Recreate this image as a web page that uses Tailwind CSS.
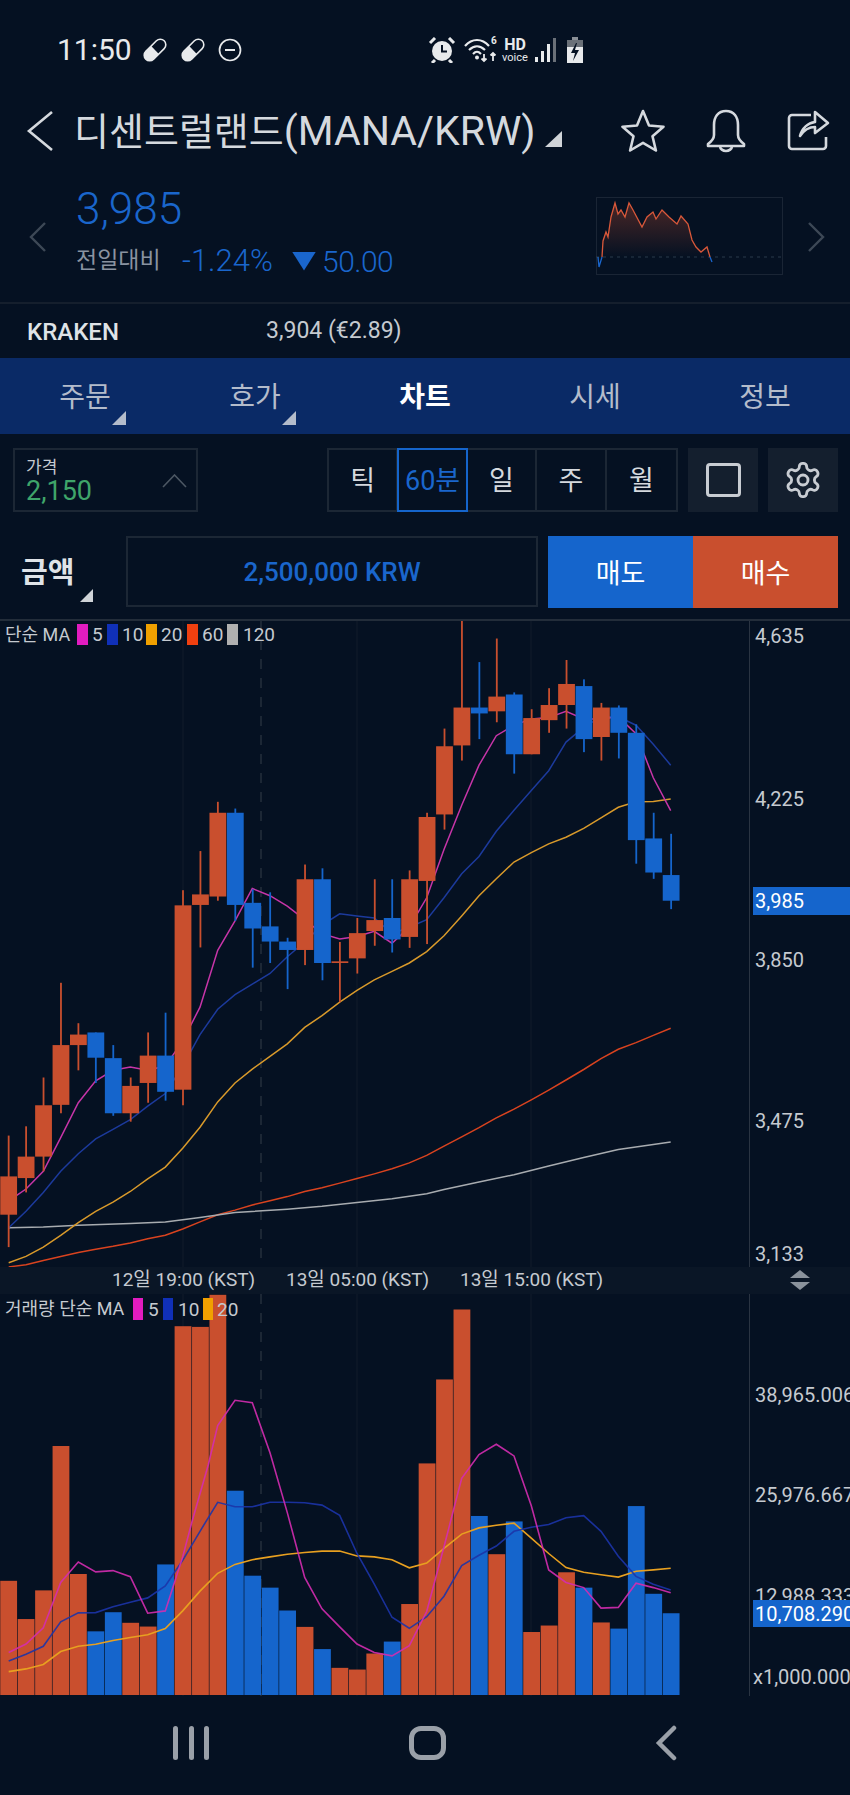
<!DOCTYPE html>
<html lang="ko">
<head>
<meta charset="utf-8">
<meta name="viewport" content="width=device-width, initial-scale=1.0">
<script src="https://cdn.jsdelivr.net/npm/@tailwindcss/browser@4"></script>
<title>MANA/KRW</title>
</head>
<body class="bg-[#051122]">
<div class="relative w-[850px] h-[1795px] overflow-hidden bg-[#051122] text-[#d5d9de] font-[Roboto,'Noto_Sans_CJK_KR',sans-serif]">

  <!-- status bar -->
  <div class="h-[102px] flex items-center pl-[57px] pb-[2px] text-[#e8eaec]">
    <span class="text-[30px] leading-none w-[85px]">11:50</span>
    <svg class="w-[26px] h-[26px]" viewBox="0 0 26 26"><g transform="rotate(45 13 13)"><rect x="7.5" y="0" width="11" height="26" rx="5.5" fill="none" stroke="#e8eaec" stroke-width="1.6"/><path d="M7.5 13h11v7.5a5.5 5.5 0 0 1-11 0z" fill="#e8eaec"/></g></svg>
    <svg class="w-[26px] h-[26px] ml-[12px]" viewBox="0 0 26 26"><g transform="rotate(45 13 13)"><rect x="7.5" y="0" width="11" height="26" rx="5.5" fill="none" stroke="#e8eaec" stroke-width="1.6"/><path d="M7.5 13h11v7.5a5.5 5.5 0 0 1-11 0z" fill="#e8eaec"/></g></svg>
    <svg class="w-[24px] h-[24px] ml-[12px]" viewBox="0 0 24 24"><circle cx="12" cy="12" r="10.5" fill="none" stroke="#e8eaec" stroke-width="1.7"/><rect x="7" y="11" width="10" height="2" fill="#e8eaec"/></svg>
    <svg class="w-[28px] h-[26px] ml-[186px]" viewBox="0 0 28 26"><circle cx="14" cy="14" r="10" fill="#e8eaec"/><path d="M14 8v6.5h5" fill="none" stroke="#051122" stroke-width="2"/><path d="M2 6l5-5M26 6l-5-5M7 23l-3 3M21 23l3 3" stroke="#e8eaec" stroke-width="3" fill="none"/></svg>
    <div class="relative w-[35px] h-[26px] ml-[8px]">
      <svg class="absolute left-0 top-0 w-[35px] h-[26px]" viewBox="0 0 35 26" fill="none" stroke="#e8eaec" stroke-width="2.200"><path d="M1 9c7-8 17-8 24 0"/><path d="M5 13c5-5 11-5 16 0"/><path d="M9 17c3-3 5-3 8 0"/><circle cx="13" cy="20.500" r="2" fill="#e8eaec" stroke="none"/><path d="M20 24v-7M17.500 21.500l2.500 2.500 2.500-2.500M29 24v-8M26.500 18.500l2.500-2.500 2.500 2.500" stroke-width="1.800"/></svg>
      <span class="absolute left-[27px] -top-[1px] text-[10px] font-bold leading-none">6</span>
    </div>
    <div class="w-[28px] ml-[2px] flex flex-col items-center">
      <span class="text-[16px] font-bold leading-[13px]">HD</span>
      <span class="text-[11px] leading-[10px] mt-[2px]">voice</span>
    </div>
    <div class="flex items-end gap-[3px] h-[24px] ml-[6px]">
      <div class="w-[3px] h-[5px] bg-[#e8eaec]"></div>
      <div class="w-[3px] h-[11px] bg-[#e8eaec]"></div>
      <div class="w-[3px] h-[18px] bg-[#e8eaec]"></div>
      <div class="w-[3px] h-[24px] bg-[#6a7078]"></div>
    </div>
    <svg class="w-[18px] h-[26px] ml-[10px]" viewBox="0 0 18 26"><rect x="6" y="0" width="6" height="3" fill="#8a8f96"/><rect x="1" y="3" width="16" height="8" fill="#6a7078"/><rect x="1" y="10" width="16" height="16" fill="#e8eaec"/><path d="M10 6l-5 10h4l-2 8 6-11h-4l2-7z" fill="#051122"/></svg>
  </div>

  <!-- title row -->
  <div class="h-[58px] flex items-center">
    <svg class="w-[28px] h-[42px] ml-[26px]" viewBox="0 0 28 42" fill="none" stroke="#d5d9de" stroke-width="2.6"><path d="M26 2L3 21l23 19"/></svg>
    <span class="ml-[20px] w-[471px] whitespace-nowrap leading-none text-[38px] text-[#d5d9de]">디센트럴랜드<span class="text-[41px]">(MANA/KRW)</span></span>
    <div class="w-[17px] h-[16px] mt-[16px] bg-[#d0d4d8] [clip-path:polygon(100%_0,100%_100%,0_100%)]"></div>
    <svg class="w-[44px] h-[44px] ml-[59px]" viewBox="0 0 44 44" fill="none" stroke="#d5d9de" stroke-width="2.6" stroke-linejoin="round"><path d="M22 2l6 14.500 14.500 1.200-11 9.500 3.400 14.300L22 33.800 9.100 41.500l3.400-14.300-11-9.500L16 16.500z"/></svg>
    <svg class="w-[42px] h-[44px] ml-[40px]" viewBox="0 0 42 44" fill="none" stroke="#d5d9de" stroke-width="2.6" stroke-linejoin="round"><path d="M21 2c-8 0-12 6-12 14v10c0 4-2 6-6 9v2h36v-2c-4-3-6-5-6-9V16c0-8-4-14-12-14z"/><path d="M15 37c0 3 3 5 6 5s6-2 6-5"/></svg>
    <svg class="w-[44px] h-[44px] ml-[40px]" viewBox="0 0 44 44" fill="none" stroke="#d5d9de" stroke-width="2.6" stroke-linejoin="round"><path d="M24 6H5a3 3 0 0 0-3 3v28a3 3 0 0 0 3 3h31a3 3 0 0 0 3-3V28"/><path d="M13 27c2-8 8-13 15-14V3l13 11-13 10v-6c-6 0-11 3-15 9z"/></svg>
  </div>

  <!-- price row -->
  <div class="h-[144px] relative border-b-2 border-[#151f2d] flex items-start">
    <svg class="w-[18px] h-[30px] ml-[29px] mt-[62px]" viewBox="0 0 18 30" fill="none" stroke="#3d4856" stroke-width="2.4"><path d="M16 1L2 15l14 14"/></svg>
    <div class="ml-[29px]">
      <div class="text-[44px] leading-none font-light text-[#1a66cc] mt-[27px] h-[54px]">3,985</div>
      <div class="flex items-center h-[40px] whitespace-nowrap">
        <span class="text-[23px] text-[#8a93a0] w-[106px]">전일대비</span>
        <span class="text-[31px] font-light text-[#1a66cc] w-[110px]">-1.24%</span>
        <div class="w-[24px] h-[19px] bg-[#1a66cc] [clip-path:polygon(0_0,100%_0,50%_100%)]"></div>
        <span class="text-[30px] font-light text-[#1a66cc] ml-[6px] tracking-[-0.5px]">50.00</span>
      </div>
    </div>
    <svg class="absolute left-[596px] top-[37px] w-[187px] h-[78px]" viewBox="0 0 187 78">
      <defs><linearGradient id="sparkFill" x1="0" y1="0" x2="0" y2="1"><stop offset="0" stop-color="#c94f2e" stop-opacity="0.35"/><stop offset="1" stop-color="#c94f2e" stop-opacity="0"/></linearGradient></defs>
      <rect x="0.500" y="0.500" width="186" height="77" fill="none" stroke="#1a2535"/>
      <path d="M6 60L7 44 10 35 12 40 15 20 19 6 22 17 25 13 29 20 33 6 37 13 46 30 51 20 57 15 60 22 66 13 73 20 81 27 85 19 92 27 96 43 100 50 105 55 111 50 114 60z" fill="url(#sparkFill)"/>
      <path d="M0 60H186" stroke="#2a3a4a" stroke-dasharray="3 4"/>
      <path d="M6 60L7 44 10 35 12 40 15 20 19 6 22 17 25 13 29 20 33 6 37 13 46 30 51 20 57 15 60 22 66 13 73 20 81 27 85 19 92 27 96 43 100 50 105 55 111 50 114 60" fill="none" stroke="#d9583a" stroke-width="1.300"/>
      <path d="M2 60l1 10 3-10M114 60l2 5" fill="none" stroke="#1a66cc" stroke-width="1.300"/>
    </svg>
    <svg class="absolute left-[807px] top-[62px] w-[18px] h-[30px]" viewBox="0 0 18 30" fill="none" stroke="#3d4856" stroke-width="2.4"><path d="M2 1l14 14L2 29"/></svg>
  </div>

  <!-- exchange row -->
  <div class="h-[54px] flex items-center pl-[27px] pt-[1px] whitespace-nowrap">
    <span class="text-[24px] font-medium w-[239px] text-[#dfe3e7]">KRAKEN</span>
    <span class="text-[23px] text-[#c5cad0]">3,904 (€2.89)</span>
  </div>

  <!-- tabs -->
  <div class="h-[76px] grid grid-cols-5 bg-[#0a2a66] text-[28px] text-center text-[#b4bccb]">
    <div class="relative flex items-center justify-center pt-[4px]">주문<div class="absolute left-[112px] top-[53px] w-[14px] h-[14px] bg-[#b4bccb] [clip-path:polygon(100%_0,100%_100%,0_100%)]"></div></div>
    <div class="relative flex items-center justify-center pt-[4px]">호가<div class="absolute left-[112px] top-[53px] w-[14px] h-[14px] bg-[#b4bccb] [clip-path:polygon(100%_0,100%_100%,0_100%)]"></div></div>
    <div class="flex items-center justify-center pt-[4px] text-white font-bold">차트</div>
    <div class="flex items-center justify-center pt-[4px]">시세</div>
    <div class="flex items-center justify-center pt-[4px]">정보</div>
  </div>

  <!-- chart options -->
  <div class="flex pt-[14px] h-[102px]">
    <div class="ml-[13px] w-[185px] h-[64px] border-2 border-[#1c2735] pl-[11px] relative">
      <div class="text-[17px] leading-none mt-[9px] text-[#c5cad0]">가격</div>
      <div class="text-[27px] leading-none mt-[2px] text-[#3fa56a]">2,150</div>
      <svg class="absolute left-[147px] top-[24px] w-[25px] h-[14px]" viewBox="0 0 25 14" fill="none" stroke="#4c5763" stroke-width="1.600"><path d="M1 13L12.500 1 24 13"/></svg>
    </div>
    <div class="ml-[129px] w-[351px] h-[64px] border-2 border-[#1c2735] grid grid-cols-5 text-[27px] text-[#d5d9de]">
      <div class="flex items-center justify-center pt-[3px] border-r-2 border-[#1c2735]">틱</div>
      <div class="flex items-center justify-center pt-[3px] -my-[2px] -ml-[1px] border-2 border-[#1565cc] text-[#1a66cc]">60분</div>
      <div class="flex items-center justify-center pt-[3px] border-r-2 border-[#1c2735]">일</div>
      <div class="flex items-center justify-center pt-[3px] border-r-2 border-[#1c2735]">주</div>
      <div class="flex items-center justify-center pt-[3px]">월</div>
    </div>
    <div class="ml-[10px] w-[70px] h-[64px] bg-[#141f2e] flex items-center justify-center">
      <div class="w-[35px] h-[34px] border-[3px] border-[#c8ccd2] rounded-[4px]"></div>
    </div>
    <div class="ml-[10px] w-[70px] h-[64px] bg-[#141f2e] flex items-center justify-center">
      <svg class="w-[40px] h-[40px]" viewBox="0 0 24 24" fill="none" stroke="#c8ccd2" stroke-width="1.700"><path d="M12.220 2h-.44a2 2 0 0 0-2 2v.18a2 2 0 0 1-1 1.730l-.43.25a2 2 0 0 1-2 0l-.15-.08a2 2 0 0 0-2.730.73l-.22.38a2 2 0 0 0 .73 2.730l.15.1a2 2 0 0 1 1 1.720v.51a2 2 0 0 1-1 1.740l-.15.09a2 2 0 0 0-.73 2.730l.22.38a2 2 0 0 0 2.730.73l.15-.08a2 2 0 0 1 2 0l.43.25a2 2 0 0 1 1 1.730V20a2 2 0 0 0 2 2h.44a2 2 0 0 0 2-2v-.18a2 2 0 0 1 1-1.730l.43-.25a2 2 0 0 1 2 0l.15.08a2 2 0 0 0 2.730-.73l.22-.39a2 2 0 0 0-.73-2.730l-.15-.08a2 2 0 0 1-1-1.740v-.5a2 2 0 0 1 1-1.740l.15-.09a2 2 0 0 0 .73-2.730l-.22-.38a2 2 0 0 0-2.730-.73l-.15.08a2 2 0 0 1-2 0l-.43-.25a2 2 0 0 1-1-1.730V4a2 2 0 0 0-2-2z"/><circle cx="12" cy="12" r="3"/></svg>
    </div>
  </div>

  <!-- amount row -->
  <div class="h-[83px] flex items-start">
    <div class="relative w-[126px] h-[72px] pl-[21px] pt-[4px] flex items-center text-[29px] font-bold text-[#dfe3e7]">금액
      <div class="absolute left-[80px] top-[53px] w-[13px] h-[13px] bg-[#d0d4d8] [clip-path:polygon(100%_0,100%_100%,0_100%)]"></div>
    </div>
    <div class="w-[412px] h-[71px] border-2 border-[#1c2735] flex items-center justify-center pt-[1px] text-[26px] font-medium text-[#1a66cc]">2,500,000 KRW</div>
    <div class="ml-[10px] w-[145px] h-[72px] bg-[#1565cc] flex items-center justify-center pt-[4px] text-[27px] text-white">매도</div>
    <div class="w-[145px] h-[72px] bg-[#c94f2e] flex items-center justify-center pt-[4px] text-[27px] text-white">매수</div>
  </div>

  <!-- price chart -->
  <div class="relative h-[648px] border-t-2 border-[#232d3a] text-[20px] leading-none text-[#c5cad0]">
    <svg id="priceChart" class="absolute left-0 top-0 w-[750px] h-[646px]" viewBox="0 0 750 646"></svg>
    <div class="absolute left-[749px] top-0 w-[1px] h-full bg-[#2a3442]"></div>
    <div class="absolute left-[5px] top-[3px] h-[21px] flex items-center whitespace-nowrap text-[18px]">
      <span class="w-[72px]">단순 MA</span>
      <div class="w-[11px] h-[21px] bg-[#e21cc0]"></div><span class="ml-[4px] w-[15px] text-[19px]">5</span>
      <div class="w-[11px] h-[21px] bg-[#1030b8]"></div><span class="ml-[4px] w-[24px] text-[19px]">10</span>
      <div class="w-[11px] h-[21px] bg-[#f0a000]"></div><span class="ml-[4px] w-[26px] text-[19px]">20</span>
      <div class="w-[11px] h-[21px] bg-[#f04010]"></div><span class="ml-[4px] w-[25px] text-[19px]">60</span>
      <div class="w-[11px] h-[21px] bg-[#b0b0b0]"></div><span class="ml-[5px] text-[19px]">120</span>
    </div>
    <div class="absolute left-[755px] top-[5px]">4,635</div>
    <div class="absolute left-[755px] top-[168px]">4,225</div>
    <div class="absolute left-[753px] top-[266px] w-[97px] h-[28px] pl-[2px] flex items-center bg-[#1565cc] text-white">3,985</div>
    <div class="absolute left-[755px] top-[329px]">3,850</div>
    <div class="absolute left-[755px] top-[490px]">3,475</div>
    <div class="absolute left-[755px] top-[623px]">3,133</div>
  </div>

  <!-- time axis -->
  <div class="relative h-[27px] bg-[#0a1626] text-[19px] text-[#c5cad0] flex items-center whitespace-nowrap">
    <span class="ml-[112px] w-[174px]">12일 19:00 (KST)</span>
    <span class="w-[174px]">13일 05:00 (KST)</span>
    <span>13일 15:00 (KST)</span>
    <svg class="absolute left-[789px] top-[3px] w-[22px] h-[21px]" viewBox="0 0 22 21" fill="#8a929c"><path d="M11 0l10 8H1zM1 12h20l-10 8z"/></svg>
  </div>

  <!-- volume chart -->
  <div class="relative h-[402px] text-[20px] leading-none text-[#c5cad0]">
    <svg id="volumeChart" class="absolute left-0 top-0 w-[750px] h-[402px]" viewBox="0 0 750 402"></svg>
    <div class="absolute left-[749px] top-0 w-[1px] h-full bg-[#2a3442]"></div>
    <div class="absolute left-[5px] top-[4px] h-[22px] flex items-center whitespace-nowrap text-[18px]">
      <span class="w-[128px]">거래량 단순 MA</span>
      <div class="w-[10px] h-[22px] bg-[#e21cc0]"></div><span class="ml-[5px] w-[15px] text-[19px]">5</span>
      <div class="w-[10px] h-[22px] bg-[#1030b8]"></div><span class="ml-[5px] w-[25px] text-[19px]">10</span>
      <div class="w-[10px] h-[22px] bg-[#f0a000]"></div><span class="ml-[4px] text-[19px]">20</span>
    </div>
    <div class="absolute left-[755px] top-[91px] whitespace-nowrap">38,965.006</div>
    <div class="absolute left-[755px] top-[191px] whitespace-nowrap">25,976.667</div>
    <div class="absolute left-[755px] top-[292px] whitespace-nowrap">12,988.333</div>
    <div class="absolute left-[753px] top-[306px] w-[97px] h-[27px] pl-[2px] flex items-center overflow-hidden whitespace-nowrap bg-[#1565cc] text-white">10,708.290</div>
    <div class="absolute left-[753px] top-[373px] whitespace-nowrap">x1,000.000</div>
  </div>

  <!-- android nav -->
  <div class="relative h-[98px]">
    <div class="absolute left-[173px] top-[30px] flex gap-[10.500px]">
      <div class="w-[5px] h-[34px] rounded-full bg-[#9aa0a8]"></div>
      <div class="w-[5px] h-[34px] rounded-full bg-[#9aa0a8]"></div>
      <div class="w-[5px] h-[34px] rounded-full bg-[#9aa0a8]"></div>
    </div>
    <div class="absolute left-[409px] top-[30px] w-[37px] h-[34px] rounded-[12px] border-[5px] border-[#9aa0a8]"></div>
    <svg class="absolute left-[655px] top-[29px] w-[22px] h-[36px]" viewBox="0 0 22 36" fill="none" stroke="#9aa0a8" stroke-width="4.500" stroke-linecap="round"><path d="M19 3L4 18l15 15"/></svg>
  </div>
</div>

<script>
  // points are read off the reference, x in 1/3 px and y in chart-zoom units
  const NS = 'http://www.w3.org/2000/svg';
  const RED = '#c94f2e', BLUE = '#1565cc';

  function add(svg, tag, attrs) {
    const el = document.createElementNS(NS, tag);
    for (const k in attrs) el.setAttribute(k, attrs[k]);
    svg.appendChild(el);
  }
  function line(svg, pts, mapY, color, width, opacity) {
    const p = [];
    for (let i = 0; i < pts.length; i += 2) p.push((pts[i] / 3).toFixed(1) + ',' + mapY(pts[i + 1]).toFixed(1));
    add(svg, 'polyline', { points: p.join(' '), fill: 'none', stroke: color, 'stroke-width': width, opacity: opacity || 1 });
  }
  function grid(svg, h) {
    [183, 357, 531].forEach(x => add(svg, 'line', { x1: x, x2: x, y1: 0, y2: h, stroke: '#121c2a' }));
    add(svg, 'line', { x1: 261, x2: 261, y1: 0, y2: h, stroke: '#1c2735', 'stroke-width': 2, 'stroke-dasharray': '10 9' });
  }

  // price pane
  const price = document.getElementById('priceChart');
  const py = y => y / 2.376 - 1;
  const cx = i => 26 + i * 52.3;
  grid(price, 646);

  // ma lines sit under the candles
  line(price, [26,1537,78,1532,130,1522,182,1512,235,1503,287,1495,339,1488,391,1480,443,1470,496,1462,548,1447,600,1430,653,1413,705,1402,757,1390,810,1380,862,1370,914,1358,966,1349,1019,1338,1071,1327,1123,1316,1176,1304,1228,1290,1280,1272,1332,1250,1385,1228,1437,1206,1489,1183,1542,1162,1594,1140,1646,1117,1698,1093,1751,1068,1803,1042,1855,1020,1908,1004,1960,987,2012,970], py, '#d9431f', 1.5);
  line(price, [26,1444,130,1442,235,1438,391,1434,496,1430,600,1420,705,1408,862,1400,966,1393,1071,1384,1176,1375,1280,1363,1332,1353,1437,1335,1542,1318,1646,1297,1751,1277,1855,1258,1960,1246,2012,1240], py, '#a8acb0', 1.5);
  line(price, [26,1527,78,1512,130,1490,182,1462,235,1432,287,1405,339,1383,391,1358,443,1328,496,1300,548,1255,600,1205,653,1145,705,1100,757,1067,810,1037,862,1007,914,968,966,940,1019,908,1071,880,1123,855,1176,835,1228,815,1280,788,1332,750,1385,703,1437,655,1489,615,1542,575,1594,553,1646,532,1698,516,1751,495,1803,470,1855,445,1908,432,1960,431,2012,425], py, '#d99a2b', 1.5);
  line(price, [26,1444,78,1405,130,1360,182,1310,235,1268,287,1233,339,1210,391,1187,443,1155,496,1125,548,1060,600,985,653,925,705,890,757,865,810,840,862,800,914,765,966,725,1019,698,1071,703,1123,708,1176,745,1228,730,1280,712,1332,660,1385,603,1437,562,1489,502,1542,452,1594,405,1646,358,1698,290,1751,255,1803,230,1855,230,1908,250,1960,295,2012,345], py, '#1c3a9c', 1.5);
  line(price, [50,1367,78,1352,130,1310,182,1230,235,1147,287,1095,339,1070,391,1062,443,1070,496,1060,548,1000,600,920,653,785,705,715,757,638,810,655,862,680,914,712,966,745,1019,758,1071,752,1123,740,1176,768,1228,730,1280,660,1332,545,1385,440,1437,345,1489,275,1542,250,1594,235,1646,232,1698,217,1751,235,1803,235,1855,230,1908,270,1960,375,2012,453], py, '#c735a8', 1.5);

  // up?, wick top, body top, body bottom, wick bottom
  const candles = [
    [1,1225,1322,1413,1490],[1,1203,1275,1326,1360],[1,1087,1153,1275,1310],[1,862,1010,1152,1172],
    [1,958,985,1010,1070],[0,980,980,1040,1100],[0,1010,1041,1172,1178],[1,1087,1107,1172,1192],
    [1,980,1035,1100,1147],[0,933,1035,1121,1142],[1,642,678,1116,1153],[1,549,652,677,778],
    [1,432,458,657,667],[0,448,458,677,715],[0,640,672,733,826],[0,647,728,764,815],
    [0,755,764,784,877],[1,581,616,784,820],[0,590,616,815,856],[1,765,811,815,908],
    [1,708,744,804,840],[1,616,713,739,774],[0,616,708,759,790],[1,595,616,753,779],
    [1,458,468,620,770],[1,258,300,462,498],[1,0,208,298,334],[0,100,208,222,283],
    [1,44,182,217,243],[0,172,177,319,365],[1,212,233,319,319],[1,162,202,238,268],
    [1,95,152,202,258],[0,141,157,283,314],[1,197,208,278,334],[0,203,208,268,329],
    [0,248,268,523,579],[0,458,519,600,615],[0,508,606,667,687]
  ];
  candles.forEach((c, i) => {
    const x = cx(i) / 3, color = c[0] ? RED : BLUE;
    add(price, 'rect', { x: x - 0.9, y: py(c[1]), width: 1.8, height: (c[4] - c[1]) / 2.376, fill: color });
    add(price, 'rect', { x: x - 8.4, y: py(c[2]), width: 16.8, height: (c[3] - c[2]) / 2.376, fill: color });
  });

  // volume pane
  const vol = document.getElementById('volumeChart');
  const vy = y => y / 2.93 - 34;
  grid(vol, 402);
  const bars = [940,1052,968,545,920,-1088,-1032,1063,1074,-892,194,196,102,-676,-925,-960,-1027,1075,-1140,1195,1200,1153,-1118,1008,596,350,145,-750,862,-766,1090,1071,915,-960,1062,-1080,-721,-978,-1035];
  bars.forEach((b, i) => {
    const top = vy(Math.abs(b));
    add(vol, 'rect', { x: cx(i) / 3 - 8.4, y: top, width: 16.8, height: 402 - top - 1, fill: b > 0 ? RED : BLUE });
  });
  line(vol, [26,1206,78,1198,130,1185,182,1147,235,1132,287,1126,339,1115,391,1106,443,1098,496,1080,548,1028,600,970,653,918,705,892,757,878,810,870,862,862,914,857,966,853,1019,853,1071,867,1123,870,1176,878,1228,902,1280,888,1332,845,1385,803,1437,785,1489,777,1542,771,1594,815,1646,860,1698,901,1751,915,1803,922,1855,929,1908,912,1960,908,2012,903], vy, '#e8a020', 1.6);
  line(vol, [26,1175,78,1155,130,1132,182,1060,235,1034,287,1033,339,1016,391,1003,443,990,496,955,548,880,600,795,653,710,705,723,757,723,810,710,862,710,914,711,966,718,1019,748,1071,860,1123,950,1176,1047,1228,1079,1280,1045,1332,985,1385,895,1437,865,1489,838,1542,795,1594,783,1646,775,1698,755,1751,749,1803,795,1855,868,1908,927,1960,950,2012,967], vy, '#1c34a8', 1.6, 0.9);
  line(vol, [26,1150,78,1125,130,1078,182,945,235,885,287,914,339,910,391,928,443,1035,496,1028,548,870,575,770,625,600,653,485,705,411,757,418,810,565,862,740,914,930,966,1022,1019,1075,1071,1125,1123,1150,1176,1160,1228,1130,1280,1030,1332,840,1385,640,1437,570,1489,540,1542,574,1594,720,1646,908,1698,945,1751,960,1803,1020,1855,1018,1908,947,1960,960,2012,975], vy, '#d42cb0', 1.6, 0.9);
</script>
</body>
</html>
